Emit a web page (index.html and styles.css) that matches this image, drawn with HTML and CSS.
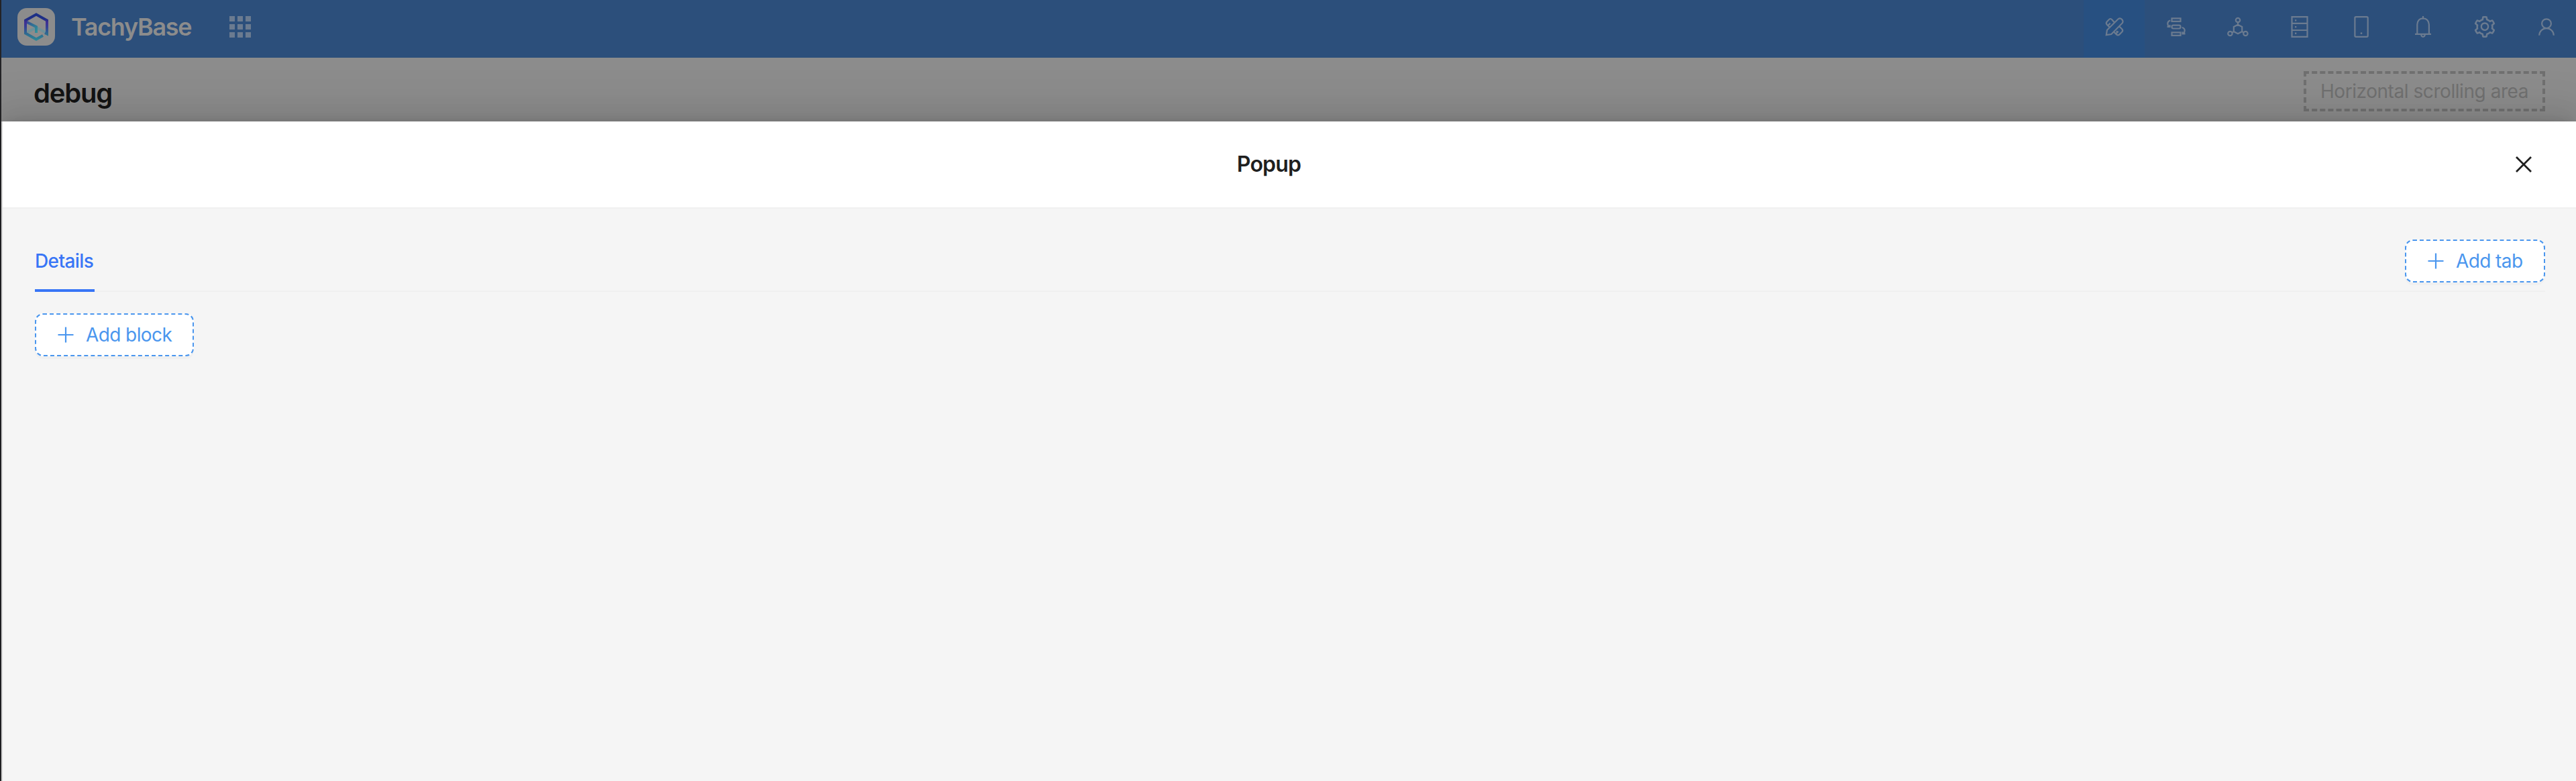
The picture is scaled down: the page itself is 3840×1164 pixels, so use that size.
FILE: index.html
```html
<!DOCTYPE html>
<html lang="en">
<head>
<meta charset="utf-8">
<title>TachyBase</title>
<link rel="stylesheet" href="styles.css">
</head>
<body>
<div class="app">
  <header class="topbar">
    <svg class="logo" viewBox="0 0 56 56">
      <defs>
        <linearGradient id="edge" gradientUnits="userSpaceOnUse" x1="0" y1="7" x2="0" y2="49">
          <stop offset="0" stop-color="#1a3087"/><stop offset=".22" stop-color="#202f86"/><stop offset=".34" stop-color="#402f93"/><stop offset=".5" stop-color="#363f96"/><stop offset=".75" stop-color="#2e6b90"/><stop offset="1" stop-color="#2f8c98"/>
        </linearGradient>
        <linearGradient id="fold" gradientUnits="userSpaceOnUse" x1="10" y1="18" x2="28" y2="37">
          <stop offset="0" stop-color="#402f93"/><stop offset=".45" stop-color="#2f6a94"/><stop offset="1" stop-color="#31919b"/>
        </linearGradient>
      </defs>
      <path d="M15 36 28 29 43 37" fill="none" stroke="#6f9098" stroke-width="4"/>
      <path d="M12 20 28 28V37" fill="none" stroke="url(#fold)" stroke-width="4"/>
      <path d="M38 41 28 46.600 12 37.500V18.500L28 9.500 44 18.500V38.500L41 37" fill="none" stroke="url(#edge)" stroke-width="4"/>
    </svg>
    <span class="brand">TachyBase</span>
    <span class="apps"><i></i><i></i><i></i><i></i><i></i><i></i><i></i><i></i><i></i></span>
    <nav class="tools">
      <a class="tool active"><svg viewBox="0 0 32 32">
        <path d="M3.800 28.200 5 20.700 21.600 4.300Q24.400 2.300 27 4.800 29.600 7.600 27.700 10.400L11.300 27Z"/>
        <path d="M16 9.400 12.200 5.200Q10.200 2.900 8 5L4.800 8.300Q2.800 10.600 4.800 12.700L9 16.800M14.800 23.200 19 27.400Q21.200 29.300 23.400 27.400L27.200 23.600Q29.200 21.400 27.200 19.200L22.800 15M6.300 14 9.700 10.600M18.300 26.200 21.700 22.800M18.800 22.400 20 23.600"/>
      </svg></a>
      <a class="tool"><svg viewBox="0 0 32 32">
        <path d="M9.500 3.300h13v4.500h-13zM9.500 24.300h13v4.500h-13z"/><rect x="9.500" y="13.700" width="13" height="4.800" rx="2.200"/>
        <path d="M7.300 6.500Q3.300 7.500 3.300 11.500 3.400 14.500 5.500 16M2.500 16h4v-3M24.700 17Q28.700 18 28.700 21.500 28.600 24.500 26.600 26.300M29.500 26.300h-4v-3"/>
      </svg></a>
      <a class="tool"><svg viewBox="0 0 32 32">
        <circle cx="16" cy="6" r="3.200"/><circle cx="4.400" cy="26" r="3.200"/><circle cx="27.400" cy="26" r="3.200"/>
        <path d="M16 12.700 22.200 16v7L16 26.300 9.800 23v-7zM16 9.200v3.500M7.200 24.500l2.600-1.500M24.600 24.500 22.200 23"/>
      </svg></a>
      <a class="tool"><svg viewBox="0 0 32 32">
        <path d="M4.500 1.200h23v29.600h-23zM4.500 10.800h23M4.500 21h23"/><path class="dot" d="M9 5.300h2.300v2.300H9zM9 15h2.300v2.300H9zM9 24.600h2.300v2.300H9z"/>
      </svg></a>
      <a class="tool"><svg viewBox="0 0 32 32">
        <rect x="6.400" y="1.200" width="19.300" height="29.600" rx="1.500"/><circle class="dot" cx="16" cy="25.700" r="1.400"/>
      </svg></a>
      <a class="tool"><svg viewBox="0 0 32 32">
        <path d="M4 26.800h24M7.300 26.800V12.500Q8 3.600 16 3.400 24 3.600 24.900 12.500V26.800M16 0v3.400M13.200 27.500Q13.500 30.800 16 30.800 18.500 30.800 18.800 27.500"/>
      </svg></a>
      <a class="tool"><svg viewBox="64 64 896 896">
        <path class="solid" d="M924.8 625.7l-65.500-56c3.100-19 4.700-38.400 4.700-57.800s-1.600-38.800-4.700-57.800l65.500-56a32.030 32.030 0 009.300-35.200l-.9-2.600a443.740 443.740 0 00-79.700-137.900l-1.800-2.100a32.120 32.120 0 00-35.100-9.500l-81.300 28.900c-30-24.600-63.500-44-99.700-57.600l-15.700-85a32.050 32.050 0 00-25.800-25.700l-2.700-.5c-52.100-9.400-106.900-9.400-159 0l-2.700.5a32.050 32.050 0 00-25.800 25.700l-15.800 85.400a351.860 351.860 0 00-99 57.400l-81.900-29.100a32 32 0 00-35.100 9.500l-1.800 2.100a446.020 446.020 0 00-79.700 137.900l-.9 2.600c-4.500 12.500-.8 26.500 9.300 35.200l66.300 56.600c-3.100 18.800-4.600 38-4.600 57.100 0 19.200 1.500 38.400 4.600 57.100L99 625.500a32.030 32.030 0 00-9.300 35.200l.9 2.600c18.100 50.400 44.900 96.900 79.700 137.900l1.800 2.100a32.120 32.120 0 0035.100 9.500l81.900-29.100c29.800 24.500 63.100 43.900 99 57.400l15.800 85.400a32.050 32.050 0 0025.800 25.700l2.700.5a449.400 449.400 0 00159 0l2.700-.5a32.050 32.050 0 0025.800-25.700l15.700-85a350 350 0 0099.700-57.600l81.300 28.900a32 32 0 0035.100-9.500l1.800-2.100c34.800-41.100 61.600-87.500 79.700-137.900l.9-2.600c4.500-12.300.8-26.300-9.300-35zM788.300 465.900c2.500 15.100 3.800 30.600 3.800 46.100s-1.300 31-3.800 46.100l-6.600 40.100 74.700 63.900a370.030 370.030 0 01-42.600 73.600L721 702.800l-31.400 25.800c-23.900 19.600-50.500 35-79.300 45.800l-38.100 14.300-17.900 97a377.500 377.500 0 01-85 0l-17.900-97.200-37.800-14.500c-28.500-10.800-55-26.200-78.700-45.700l-31.400-25.900-93.400 33.200c-17-22.900-31.200-47.600-42.600-73.600l75.500-64.500-6.500-40c-2.400-14.900-3.700-30.300-3.700-45.500 0-15.300 1.200-30.600 3.700-45.500l6.500-40-75.500-64.500c11.300-26.100 25.600-50.700 42.600-73.600l93.400 33.200 31.400-25.900c23.700-19.500 50.200-34.900 78.700-45.700l37.900-14.300 17.900-97.200c28.100-3.200 56.800-3.200 85 0l17.900 97 38.100 14.300c28.700 10.800 55.400 26.200 79.300 45.800l31.400 25.800 92.800-32.900c17 22.900 31.200 47.600 42.600 73.600L781.800 426l6.500 39.900zM512 326c-97.200 0-176 78.800-176 176s78.800 176 176 176 176-78.800 176-176-78.800-176-176-176zm79.200 255.200A111.600 111.600 0 01512 614c-29.900 0-58-11.700-79.200-32.800A111.600 111.600 0 01400 502c0-29.900 11.700-58 32.800-79.200C454 401.600 482.100 390 512 390c29.900 0 58 11.600 79.200 32.800A111.600 111.600 0 01624 502c0 29.900-11.700 58-32.800 79.200z"/>
      </svg></a>
      <a class="tool"><svg viewBox="0 0 32 32">
        <circle cx="16" cy="11.200" r="6.900"/><path d="M5.200 28.700A10.800 10.600 0 0 1 26.800 28.700"/>
      </svg></a>
    </nav>
  </header>

  <section class="page-head">
    <h1>debug</h1>
    <div class="scroll-area"><span>Horizontal scrolling area</span></div>
  </section>

  <main class="drawer">
    <div class="drawer-head">
      <h2>Popup</h2>
      <svg class="close" viewBox="0 0 24 24"><path d="M1 1 23 23M23 1 1 23"/></svg>
    </div>
    <div class="drawer-body">
      <div class="tabs">
        <div class="tab"><span>Details</span></div>
        <button class="add add-tab"><svg viewBox="0 0 24 24"><path d="M12 .5v23M.5 12h23"/></svg><span>Add tab</span></button>
      </div>
      <button class="add add-block"><svg viewBox="0 0 24 24"><path d="M12 .5v23M.5 12h23"/></svg><span>Add block</span></button>
    </div>
  </main>
</div>
</body>
</html>
```
FILE: styles.css
```css
* { box-sizing: border-box; }
body {
  margin: 0;
  background: #232326;
  font-family: Inter, "Liberation Sans", sans-serif;
  font-size: 28px;
  overflow: hidden;
}
.app {
  display: flex;
  flex-direction: column;
  height: 1164px;
  margin-left: 2px;
  background: #8c8c8c;
}
.topbar {
  display: flex;
  align-items: center;
  flex: none;
  height: 86px;
  padding: 0 0 6px 24px;
  background: #2c4f7b;
}
.logo {
  width: 56px;
  height: 56px;
  border-radius: 14px;
  background: #8c8c8c;
}
.brand {
  width: 181px;
  margin-left: 24px;
  color: #8c8c8c;
  font-size: 36px;
  font-weight: 600;
  line-height: 56px;
  letter-spacing: -1.3px;
  white-space: nowrap;
}
.apps {
  display: grid;
  grid-template-columns: repeat(3, 8px);
  gap: 4px;
  margin-left: 55px;
}
.apps i {
  height: 8px;
  background: #6b7b90;
}
.tools {
  display: flex;
  align-self: flex-start;
  margin-left: auto;
  margin-right: -2px;
}
.tool {
  display: flex;
  justify-content: center;
  width: 92px;
  height: 86px;
  padding-top: 24px;
}
.tool.active {
  background: linear-gradient(#275081, #275081) 0 0 / 91px 86px no-repeat;
}
.tool svg {
  width: 32px;
  height: 32px;
  fill: none;
  stroke: #6b7b90;
  stroke-width: 2.2;
  overflow: visible;
}
.tool .solid,
.tool .dot {
  fill: #6b7b90;
  stroke: none;
}
.page-head {
  display: flex;
  justify-content: space-between;
  align-items: flex-start;
  flex: none;
  height: 95px;
  padding: 20px 46px 0 48px;
}
h1, h2 {
  margin: 0;
  font-weight: 600;
}
h1 {
  padding-top: 1px;
  color: #131313;
  font-size: 40px;
  line-height: 64px;
  letter-spacing: -1.2px;
}
.scroll-area {
  display: flex;
  align-items: center;
  justify-content: center;
  width: 360px;
  height: 60px;
  border: 4px dashed #707070;
  color: #707070;
  letter-spacing: -.44px;
  white-space: nowrap;
}
.drawer {
  display: flex;
  flex-direction: column;
  flex: 1;
  border-left: 2px solid #d9d9d9;
  background: #f5f5f5;
  box-shadow: 0 -12px 32px rgba(0, 0, 0, .08), 0 -6px 12px -8px rgba(0, 0, 0, .12), 0 -18px 56px 16px rgba(0, 0, 0, .05);
}
.drawer-head {
  display: flex;
  align-items: center;
  flex: none;
  height: 130px;
  padding-right: 66px;
  border-bottom: 2px solid #f0f0f0;
  background: #fff;
}
h2 {
  flex: 1;
  padding-left: 29px;
  color: #1f1f1f;
  font-size: 32px;
  line-height: 48px;
  letter-spacing: -.8px;
  text-align: center;
}
.close {
  width: 24px;
  height: 24px;
  fill: none;
  stroke: #1f1f1f;
  stroke-width: 2.8;
}
.drawer-body {
  padding: 0 46px 0 48px;
}
.tabs {
  display: flex;
  justify-content: space-between;
  height: 124px;
  padding-top: 46px;
  border-bottom: 2px solid #f0f0f0;
}
.tab {
  width: 89px;
  margin-bottom: -2px;
  border-bottom: 4px solid #3875f6;
  color: #3875f6;
  font-weight: 500;
  line-height: 64px;
  letter-spacing: -.6px;
  white-space: nowrap;
}
.add {
  display: flex;
  align-items: center;
  height: 64px;
  padding: 0 0 0 32px;
  border: 2px dashed #4a96ee;
  border-radius: 12px;
  background: #fff;
  box-shadow: 0 4px 0 rgba(0, 0, 0, .02);
  color: #4a96ee;
  font: inherit;
  letter-spacing: -.6px;
  white-space: nowrap;
}
.add svg {
  width: 24px;
  height: 24px;
  margin-right: 18px;
  fill: none;
  stroke: #4a96ee;
  stroke-width: 2.2;
}
.add-tab { width: 209px; }
.add-block {
  width: 237px;
  margin-top: 32px;
}
```
